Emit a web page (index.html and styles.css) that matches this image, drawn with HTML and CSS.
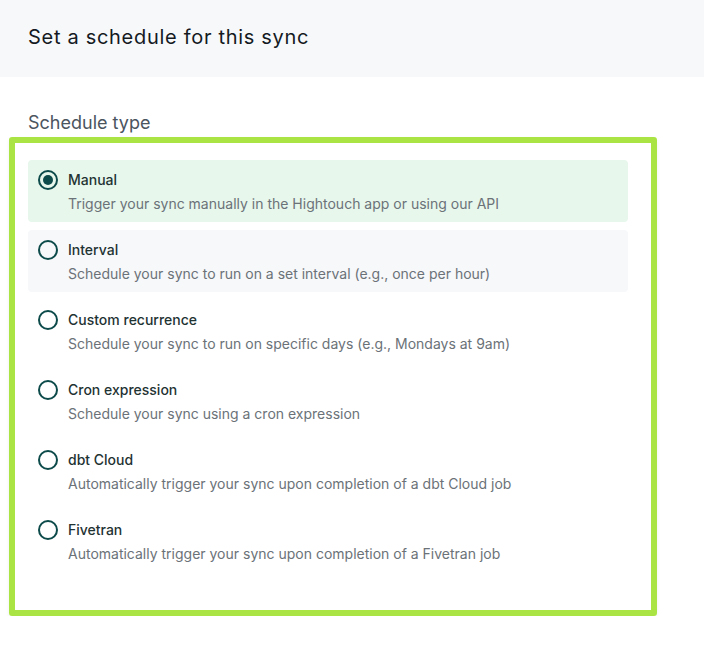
FILE: index.html
```html
<!DOCTYPE html>
<html>
<head>
<meta charset="utf-8">
<link rel="stylesheet" href="styles.css">
</head>
<body>
<header class="header"><h1 class="title">Set a schedule for this sync</h1></header>
<main class="content">
  <div class="field-label">Schedule type</div>
  <div class="card">
    <div class="option selected">
      <span class="radio checked"></span>
      <div class="text">
        <div class="label">Manual</div>
        <div class="desc">Trigger your sync manually in the Hightouch app or using our API</div>
      </div>
    </div>
    <div class="option hover">
      <span class="radio"></span>
      <div class="text">
        <div class="label">Interval</div>
        <div class="desc">Schedule your sync to run on a set interval (e.g., once per hour)</div>
      </div>
    </div>
    <div class="option">
      <span class="radio"></span>
      <div class="text">
        <div class="label">Custom recurrence</div>
        <div class="desc">Schedule your sync to run on specific days (e.g., Mondays at 9am)</div>
      </div>
    </div>
    <div class="option">
      <span class="radio"></span>
      <div class="text">
        <div class="label">Cron expression</div>
        <div class="desc">Schedule your sync using a cron expression</div>
      </div>
    </div>
    <div class="option">
      <span class="radio"></span>
      <div class="text">
        <div class="label">dbt Cloud</div>
        <div class="desc">Automatically trigger your sync upon completion of a dbt Cloud job</div>
      </div>
    </div>
    <div class="option">
      <span class="radio"></span>
      <div class="text">
        <div class="label">Fivetran</div>
        <div class="desc">Automatically trigger your sync upon completion of a Fivetran job</div>
      </div>
    </div>
  </div>
</main>
</body>
</html>
```
FILE: styles.css
```css
* { box-sizing: border-box; }
html, body { margin: 0; padding: 0; background: #ffffff; }
body { font-family: Inter, "Noto Sans", sans-serif; color: #1f2933; }
.header {
  height: 77px;
  background: #f7f8fa;
  display: flex;
  align-items: center;
  padding-left: 28px;
}
.title {
  margin: 0;
  font-size: 20px;
  letter-spacing: 0.7px;
  font-weight: 400;
  color: #141a1f;
  line-height: 28px;
  padding-bottom: 4px;
}
.content { padding-top: 34px; }
.field-label {
  margin-left: 28px;
  font-size: 18px;
  line-height: 24px;
  color: #4b5560;
  margin-bottom: 2px;
}
.card {
  margin-left: 9px;
  width: 648px;
  border: 6px solid #aae444;
  border-radius: 3px;
  padding: 17px 23px 38px 13px;
  display: flex;
  flex-direction: column;
  gap: 8px;
  box-shadow: 0 2px 4px rgba(0,0,0,0.06);
}
.option {
  height: 62px;
  border-radius: 4px;
  display: flex;
  align-items: flex-start;
  padding: 10px 10px 8px 10px;
  gap: 10px;
}
.option.selected { background: #e7f7ec; }
.option.hover { background: #f7f8fa; }
.radio {
  width: 20px;
  height: 20px;
  border: 2px solid #0d4a4a;
  border-radius: 50%;
  flex: none;
  display: flex;
  align-items: center;
  justify-content: center;
}
.radio.checked::after {
  content: "";
  width: 10px;
  height: 10px;
  border-radius: 50%;
  background: #0d4a4a;
}
.text { display: flex; flex-direction: column; gap: 4px; }
.label {
  font-size: 14px;
  line-height: 20px;
  font-weight: 500;
  color: #1f3333;
}
.desc {
  font-size: 14px;
  line-height: 20px;
  color: #6b7278;
}
```
